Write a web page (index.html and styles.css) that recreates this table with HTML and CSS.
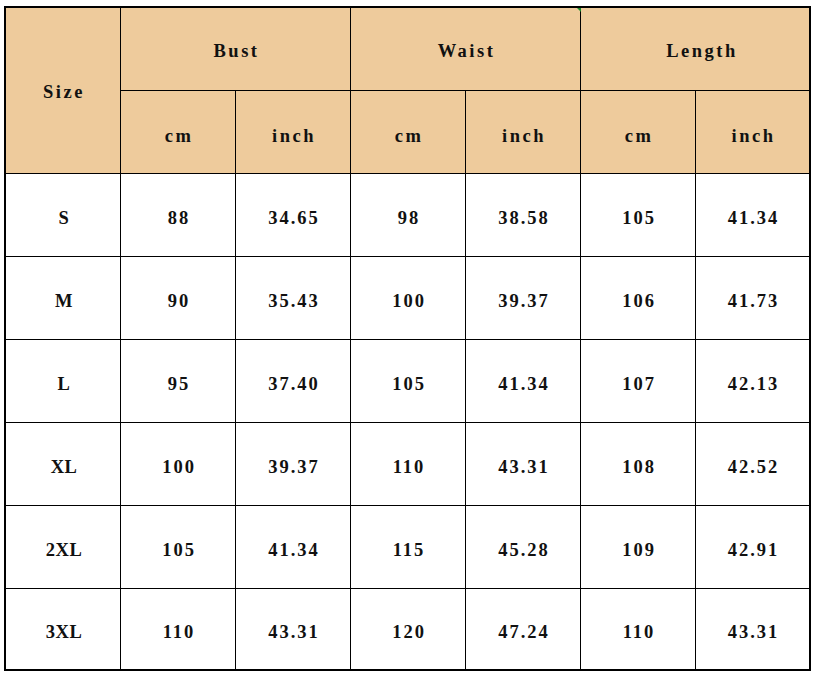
FILE: index.html
```html
<!DOCTYPE html>
<html>
<head>
<meta charset="utf-8">
<link rel="stylesheet" href="styles.css">
</head>
<body>
<div class="chart">
  <div class="cell head size-head">Size</div>
  <div class="cell head group">Bust</div>
  <div class="cell head group waist">Waist<span class="marker"></span></div>
  <div class="cell head group length">Length</div>
  <div class="cell head">cm</div>
  <div class="cell head">inch</div>
  <div class="cell head">cm</div>
  <div class="cell head">inch</div>
  <div class="cell head">cm</div>
  <div class="cell head">inch</div>

  <div class="cell sz">S</div><div class="cell">88</div><div class="cell">34.65</div><div class="cell">98</div><div class="cell">38.58</div><div class="cell">105</div><div class="cell">41.34</div>
  <div class="cell sz">M</div><div class="cell">90</div><div class="cell">35.43</div><div class="cell">100</div><div class="cell">39.37</div><div class="cell">106</div><div class="cell">41.73</div>
  <div class="cell sz">L</div><div class="cell">95</div><div class="cell">37.40</div><div class="cell">105</div><div class="cell">41.34</div><div class="cell">107</div><div class="cell">42.13</div>
  <div class="cell sz">XL</div><div class="cell">100</div><div class="cell">39.37</div><div class="cell">110</div><div class="cell">43.31</div><div class="cell">108</div><div class="cell">42.52</div>
  <div class="cell sz">2XL</div><div class="cell">105</div><div class="cell">41.34</div><div class="cell">115</div><div class="cell">45.28</div><div class="cell">109</div><div class="cell">42.91</div>
  <div class="cell sz">3XL</div><div class="cell">110</div><div class="cell">43.31</div><div class="cell">120</div><div class="cell">47.24</div><div class="cell">110</div><div class="cell">43.31</div>
</div>
</body>
</html>
```
FILE: styles.css
```css
html, body {
  margin: 0;
  padding: 0;
  background: #ffffff;
}
body {
  padding: 6px 0 0 4px;
}
.chart {
  display: grid;
  grid-template-columns: 114px 114px 114px 114px 114px 114px 113px;
  grid-template-rows: 82px 82px 82px 82px 82px 82px 82px 80px;
  gap: 1px;
  width: 803px;
  background: #000;
  border: 2px solid #000;
}
.cell {
  background: #fff;
  display: flex;
  align-items: center;
  justify-content: center;
  font-family: "Liberation Serif", "Times New Roman", serif;
  font-weight: bold;
  font-size: 18.5px;
  letter-spacing: 2px;
  color: #111;
  padding-top: 6px;
  padding-left: 2px;
  box-sizing: border-box;
}
.sz {
  letter-spacing: 0.5px;
}
.head {
  background: #eecb9c;
  padding-top: 8px;
  letter-spacing: 2.5px;
}
.size-head {
  grid-row: span 2;
  padding-top: 4px;
}
.group {
  grid-column: span 2;
  padding-top: 5px;
}
.length {
  padding-left: 14px;
}
.waist {
  position: relative;
}
.marker {
  position: absolute;
  top: 0;
  right: -1px;
  width: 0;
  height: 0;
  border-top: 4px solid #1a8a2a;
  border-left: 4px solid transparent;
}
```
